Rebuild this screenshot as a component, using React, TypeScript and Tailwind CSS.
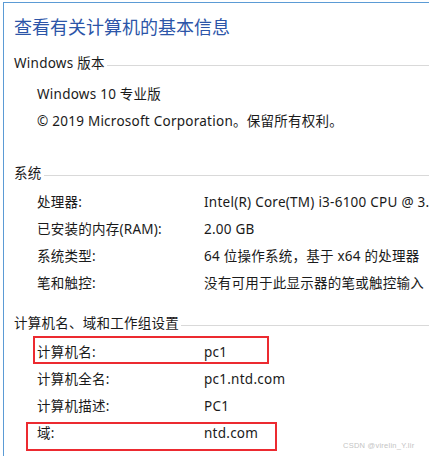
const font = { fontFamily: '"Noto Sans", "Noto Sans CJK SC", sans-serif' }

const systemRows = [
  { label: '处理器:', value: 'Intel(R) Core(TM) i3-6100 CPU @ 3.70GHz   3.70 GHz' },
  { label: '已安装的内存(RAM):', value: '2.00 GB' },
  { label: '系统类型:', value: '64 位操作系统，基于 x64 的处理器' },
  { label: '笔和触控:', value: '没有可用于此显示器的笔或触控输入' },
]

const nameRows = [
  { label: '计算机名:', value: 'pc1' },
  { label: '计算机全名:', value: 'pc1.ntd.com' },
  { label: '计算机描述:', value: 'PC1' },
  { label: '域:', value: 'ntd.com' },
]

function SectionHeading({ title, className }: { title: string; className?: string }) {
  return (
    <div className={`flex h-[24px] items-center pl-[10px] ${className ?? ''}`}>
      <span className="whitespace-nowrap">{title}</span>
      <div className="ml-[2px] mt-[5px] h-px flex-1 bg-[#d9d9d9]" />
    </div>
  )
}

function InfoRow({ label, value }: { label: string; value: string }) {
  return (
    <div className="flex h-[27px] items-center whitespace-nowrap pl-[33px]">
      <span className="w-[167px] shrink-0">{label}</span>
      <span>{value}</span>
    </div>
  )
}

export default function App() {
  return (
    <div
      className="relative h-[456px] w-[429px] overflow-hidden bg-white pl-[3px] pt-[2px] text-[13.5px] tracking-[0.25px] text-[#1a1a1a]"
      style={font}
    >
      <div className="h-full border-l border-t border-[#5b9bd5]">
        {/* Title */}
        <div className="flex h-[48px] items-center pl-[10px] text-[18px] tracking-normal text-[#2c55a8]">
          查看有关计算机的基本信息
        </div>

        <SectionHeading title="Windows 版本" />
        <div className="mt-[6px]">
          <div className="flex h-[27px] items-center pl-[33px]">Windows 10 专业版</div>
          <div className="flex h-[27px] items-center whitespace-nowrap pl-[33px]">
            © 2019 Microsoft Corporation。保留所有权利。
          </div>
        </div>

        <SectionHeading title="系统" className="mt-[26px]" />
        <div className="mt-[4px]">
          {systemRows.map((r) => (
            <InfoRow key={r.label} label={r.label} value={r.value} />
          ))}
        </div>

        <SectionHeading title="计算机名、域和工作组设置" className="mt-[14px]" />
        <div className="mt-[4px]">
          {nameRows.map((r) => (
            <InfoRow key={r.label} label={r.label} value={r.value} />
          ))}
        </div>
      </div>

      {/* red highlight boxes */}
      <div className="absolute left-[33px] top-[336px] h-[28px] w-[236px] border-2 border-[#ec2a30]" />
      <div className="absolute left-[26px] top-[422px] h-[29px] w-[251px] border-2 border-[#ec2a30]" />

      {/* watermark */}
      <div
        className="absolute left-[343px] top-[440px] whitespace-nowrap text-[7.5px] text-[#c4c4c4]"
        style={{ fontFamily: '"Liberation Sans", sans-serif' }}
      >
        CSDN @virelin_Y.lir
      </div>
    </div>
  )
}
